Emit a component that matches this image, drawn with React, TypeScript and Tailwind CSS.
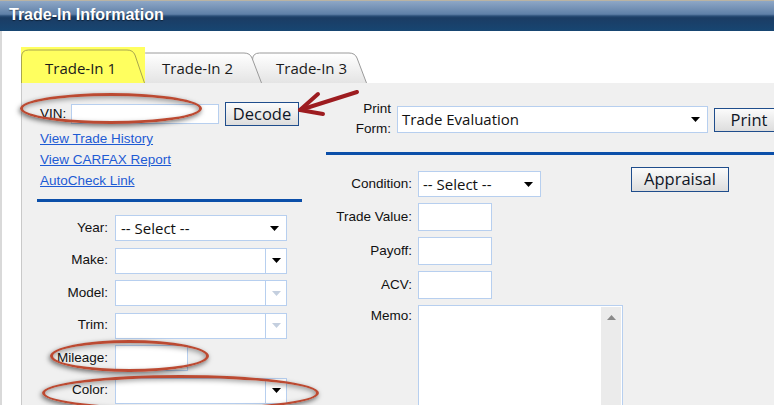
const ctl = "font-['Open_Sans','Noto_Sans',sans-serif]";
const field = "border border-[#b7cfef] bg-white";
const lbl = "text-[13.5px] text-[#111]";
const ring =
  "pointer-events-none absolute rounded-[50%] border-[3px] border-[#bb4a32] shadow-[-1px_2px_5px_rgba(0,0,0,0.55),inset_-1px_2px_5px_rgba(0,0,0,0.35)]";

function Caret({ faded }: { faded?: boolean }) {
  return (
    <svg width="9" height="5" viewBox="0 0 9 5" className="shrink-0">
      <polygon points="0,0 9,0 4.5,5" fill={faded ? "#c4cfdf" : "#000"} />
    </svg>
  );
}

function Tab({
  id,
  label,
  width,
  top,
  active,
  className,
}: {
  id: string;
  label: string;
  width: number;
  top: number;
  active?: boolean;
  className: string;
}) {
  const w = width;
  const h = 36;
  const d = `M0.5,${h} L0.5,${top + 7} Q0.5,${top} 7.5,${top} L${w - 18},${top} Q${w - 12},${top} ${w - 10},${top + 5} L${w - 0.5},${h}`;
  return (
    <div className={`relative h-[36px] shrink-0 ${className}`}>
      <svg width={w} height={h} className="absolute left-0 top-0">
        <defs>
          <linearGradient id={id} x1="0" y1="0" x2="0" y2="1">
            <stop offset="0" stopColor="#ffffff" />
            <stop offset="1" stopColor="#e4e4e4" />
          </linearGradient>
        </defs>
        <path
          d={d}
          fill={active ? "#ffff5f" : `url(#${id})`}
          stroke={active ? "#a8a64e" : "#9a9a9a"}
          strokeWidth="1"
        />
      </svg>
      <span className={`relative block pl-[24px] pt-[12px] text-[15px] leading-[18px] text-[#1a1a1a] ${ctl}`}>
        {label}
      </span>
    </div>
  );
}

function SplitSelect({ faded }: { faded?: boolean }) {
  return (
    <div className={`flex h-[26px] w-[172px] ${field}`}>
      <div className="flex-1" />
      <div className="flex w-[21px] items-center justify-center border-l border-[#b7cfef]">
        <Caret faded={faded} />
      </div>
    </div>
  );
}

function Btn({ label, className }: { label: string; className: string }) {
  return (
    <div
      className={`flex shrink-0 items-center justify-center border border-[#1f4d8c] bg-[linear-gradient(#fbfbfb,#dddddd)] text-[16.5px] text-[#0f1626] ${ctl} ${className}`}
    >
      {label}
    </div>
  );
}

export default function App() {
  return (
    <div className="relative h-[405px] w-[774px] overflow-hidden bg-white font-['Liberation_Sans',Arial,sans-serif] text-[#111]">
      {/* Title bar */}
      <div className="flex h-[31px] items-center border-t border-[#b9b3a3] bg-[linear-gradient(to_bottom,#8ea7c6_0%,#5f80a8_44%,#2a4e78_50%,#1b3c64_56%,#174672_100%)] pb-[3px] pl-[9px] text-[16px] font-bold text-white [text-shadow:0_1px_1px_rgba(0,0,0,0.45)]">
        Trade-In Information
      </div>

      <div className="border-l-2 border-[#d9d9d9] pl-[19px]">
        {/* Tabs */}
        <div className="flex pt-[16px]">
          <Tab id="t1" label="Trade-In 1" width={124} top={3} active className="z-30 w-[124px] bg-[#ffff5f]" />
          <Tab id="t2" label="Trade-In 2" width={124} top={6} className="z-20 -ml-[7px] w-[124px]" />
          <Tab id="t3" label="Trade-In 3" width={115} top={6} className="z-10 -ml-[10px] w-[115px]" />
        </div>

        {/* Panel */}
        <div className="flex h-[322px] border-l border-[#c9c9c9] bg-[#f0f0f0]">
          {/* Left column */}
          <div className="w-[304px] shrink-0 pt-[19px]">
            <div className="flex h-[24px] items-center pl-[18px]">
              <span className={`w-[31px] ${lbl}`}>VIN:</span>
              <div className={`h-[20px] w-[148px] ${field}`} />
              <Btn label="Decode" className="ml-[6px] h-[24px] w-[74px]" />
            </div>

            <div className="mt-[2px] flex flex-col items-start pl-[18px] text-[13.5px] leading-[21px] text-[#1e5bd4] underline">
              <span>View Trade History</span>
              <span>View CARFAX Report</span>
              <span>AutoCheck Link</span>
            </div>

            <div className="ml-[15px] mt-[8px] h-[3px] w-[265px] bg-[#0b4fa9]" />

            <div className="ml-[15px] mt-[13px] grid grid-cols-[71px_172px] items-center gap-x-[7px] gap-y-[6.5px]">
              <span className={`text-right ${lbl}`}>Year:</span>
              <div className={`flex h-[26px] items-center justify-between pl-[5px] pr-[7px] text-[15px] ${ctl} ${field}`}>
                <span>-- Select --</span>
                <Caret />
              </div>
              <span className={`text-right ${lbl}`}>Make:</span>
              <SplitSelect />
              <span className={`text-right ${lbl}`}>Model:</span>
              <SplitSelect faded />
              <span className={`text-right ${lbl}`}>Trim:</span>
              <SplitSelect faded />
              <span className={`text-right ${lbl}`}>Mileage:</span>
              <div className={`h-[26px] w-[73px] ${field}`} />
              <span className={`text-right ${lbl}`}>Color:</span>
              <SplitSelect />
            </div>
          </div>

          {/* Right column */}
          <div className="min-w-0 flex-1 pt-[16px]">
            <div className="flex items-center">
              <span className={`w-[65px] shrink-0 text-right leading-[20px] ${lbl}`}>
                Print
                <br />
                Form:
              </span>
              <div className={`ml-[6px] flex h-[27px] w-[311px] shrink-0 items-center justify-between pl-[4px] pr-[7px] text-[15px] ${ctl} ${field}`}>
                <span>Trade Evaluation</span>
                <Caret />
              </div>
              <Btn label="Print" className="ml-[6px] mt-[2px] h-[24px] w-[70px]" />
            </div>

            <div className="mt-[13px] h-[3px] bg-[#0b4fa9]" />

            <div className="mt-[12px] grid grid-cols-[86px_auto] gap-x-[6px] gap-y-[6px]">
              <span className={`flex h-[30px] items-center justify-end pt-[4px] ${lbl}`}>Condition:</span>
              <div className="flex h-[30px] items-start">
                <div className={`mt-[4px] flex h-[26px] w-[123px] items-center justify-between pl-[4px] pr-[7px] text-[15px] ${ctl} ${field}`}>
                  <span>-- Select --</span>
                  <Caret />
                </div>
                <Btn label="Appraisal" className="ml-[90px] h-[25px] w-[98px]" />
              </div>

              <span className={`flex items-center justify-end ${lbl}`}>Trade Value:</span>
              <div className={`h-[28px] w-[74px] ${field}`} />
              <span className={`flex items-center justify-end ${lbl}`}>Payoff:</span>
              <div className={`h-[28px] w-[74px] ${field}`} />
              <span className={`flex items-center justify-end ${lbl}`}>ACV:</span>
              <div className={`h-[28px] w-[74px] ${field}`} />

              <span className={`pt-[1px] text-right leading-[20px] ${lbl}`}>Memo:</span>
              <div className={`flex h-[120px] w-[205px] justify-end pr-[1px] pt-[1px] ${field}`}>
                <div className="flex w-[20px] justify-center bg-[#ebebeb] pt-[8px]">
                  <svg width="9" height="5" viewBox="0 0 9 5">
                    <polygon points="0,5 9,5 4.5,0" fill="#8a8a8a" />
                  </svg>
                </div>
              </div>
            </div>
          </div>
        </div>
      </div>

      {/* Annotation: red ellipses */}
      <div className={`${ring} left-[20px] top-[93px] h-[31px] w-[182px]`} />
      <div className={`${ring} left-[50px] top-[340px] h-[32px] w-[159px]`} />
      <div className={`${ring} left-[42px] top-[375px] h-[36px] w-[277px]`} />

      {/* Annotation: arrow pointing at Decode */}
      <svg className="pointer-events-none absolute left-[295px] top-[85px]" width="70" height="35" viewBox="0 0 70 35">
        <g stroke="#9d1c20" strokeWidth="4" strokeLinecap="round" fill="none">
          <line x1="5" y1="25" x2="62" y2="7" />
          <line x1="5" y1="25" x2="23" y2="9" />
          <line x1="5" y1="25" x2="28" y2="29" />
        </g>
      </svg>
    </div>
  );
}
